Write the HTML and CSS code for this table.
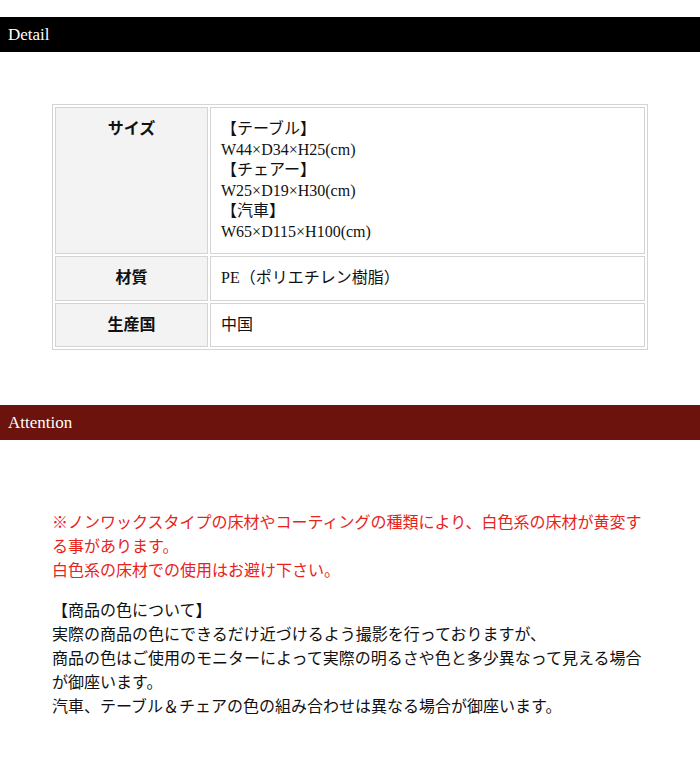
FILE: index.html
```html
<!DOCTYPE html>
<html lang="ja">
<head>
    <meta charset="UTF-8">
    <meta name="viewport" content="width=device-width, initial-scale=1.0">
    <title>Detail</title>
    <link rel="stylesheet" href="styles.css">
</head>
<body>
    <h2 class="bar bar-detail">Detail</h2>

    <table class="spec">
        <tr>
            <th>サイズ</th>
            <td>【テーブル】<br>W44×D34×H25(cm)<br>【チェアー】<br>W25×D19×H30(cm)<br>【汽車】<br>W65×D115×H100(cm)</td>
        </tr>
        <tr>
            <th>材質</th>
            <td>PE（ポリエチレン樹脂）</td>
        </tr>
        <tr>
            <th>生産国</th>
            <td>中国</td>
        </tr>
    </table>

    <h2 class="bar bar-attention">Attention</h2>

    <div class="notes">
        <p class="warn">※ノンワックスタイプの床材やコーティングの種類により、白色系の床材が黄変する事があります。<br>白色系の床材での使用はお避け下さい。</p>
        <p>【商品の色について】<br>実際の商品の色にできるだけ近づけるよう撮影を行っておりますが、<br>商品の色はご使用のモニターによって実際の明るさや色と多少異なって見える場合が御座います。<br>汽車、テーブル＆チェアの色の組み合わせは異なる場合が御座います。</p>
    </div>
</body>
</html>
```

FILE: styles.css
```css
body {
    margin: 0;
    font-family: "Liberation Serif", "Noto Sans CJK JP", serif;
    font-size: 16px;
    color: #111;
    background: #fff;
}
.bar {
    margin: 0;
    height: 35px;
    line-height: 35px;
    padding: 0 8px;
    font-size: 17px;
    font-weight: normal;
    color: #fff;
}
.bar-detail {
    margin-top: 17px;
    background: #000;
}
.bar-attention {
    margin-top: 55px;
    background: #6b130c;
}
.spec {
    width: 596px;
    margin: 52px auto 0;
    border: 1px solid #d4d4d4;
    border-spacing: 2px;
}
.spec th, .spec td {
    border: 1px solid #d4d4d4;
    padding: 11px 10px;
    line-height: 20.5px;
    vertical-align: top;
    text-align: left;
}
.spec th {
    width: 131px;
    background: #f3f3f3;
    text-align: center;
    font-weight: bold;
}
.notes {
    width: 596px;
    margin: 0 auto;
    padding-top: 55px;
}
.notes p {
    margin: 16px 0;
    line-height: 24px;
}
.notes .warn {
    color: #e8231b;
}
```
